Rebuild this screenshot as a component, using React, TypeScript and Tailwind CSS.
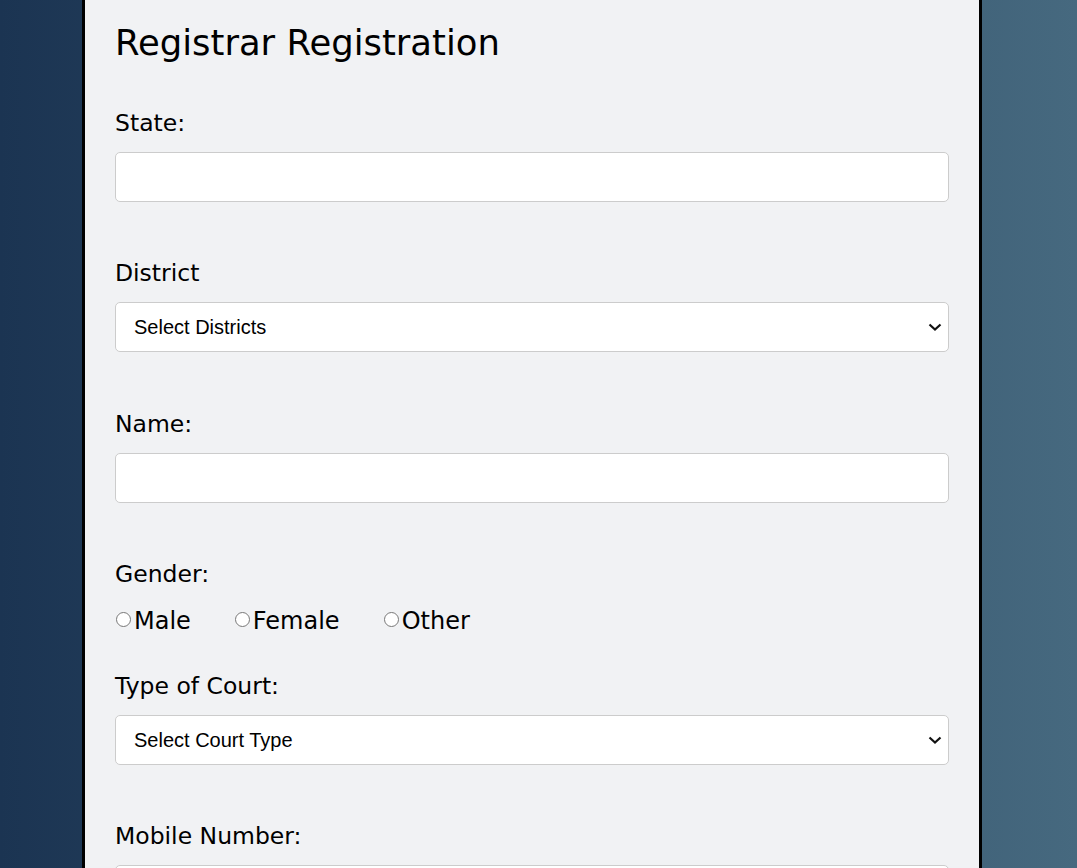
import React, { useState } from 'react';

const labelCls = "block h-[30px] leading-[30px] text-[23.5px] text-black mb-[14px]";
const fieldCls = "block w-full h-[50px] bg-white border border-[#cccccc] rounded-[5px] px-[15px] text-[20px] text-black outline-none";

const Field = ({ label, gap = 'mb-[56px]', children }: { label: string; gap?: string; children: React.ReactNode }) => (
  <div className={gap}>
    <label className={labelCls}>{label}</label>
    {children}
  </div>
);

const Select = ({ placeholder }: { placeholder: string }) => (
  <div className="relative">
    <select
      className={fieldCls + " appearance-none pl-[18px]"}
      style={{ fontFamily: '"Liberation Sans", Arial, sans-serif' }}
      defaultValue=""
    >
      <option value="">{placeholder}</option>
    </select>
    <svg
      className="absolute right-[7px] top-1/2 -translate-y-1/2 pointer-events-none"
      width="14"
      height="10"
      viewBox="0 0 14 10"
      fill="none"
    >
      <path d="M1.5 2.5 L7 7.5 L12.5 2.5" stroke="#111" strokeWidth="2.2" />
    </svg>
  </div>
);

export default function App() {
  const [gender, setGender] = useState('');

  return (
    <div className="min-h-screen w-full bg-gradient-to-r from-[#1b3452] to-[#46697f] overflow-hidden">
      <div
        className="w-[900px] ml-[82px] min-h-[868px] bg-[#f1f2f4] border-x-[3px] border-black px-[30px] pt-[21px]"
        style={{ fontFamily: '"DejaVu Sans", sans-serif' }}
      >
        <h2 className="h-[44px] leading-[44px] text-[35.4px] text-black mb-[43px]">Registrar Registration</h2>

        <Field label="State:">
          <input type="text" className={fieldCls} />
        </Field>

        <Field label="District" gap="mb-[57px]">
          <Select placeholder="Select Districts" />
        </Field>

        <Field label="Name:">
          <input type="text" className={fieldCls} />
        </Field>

        <div className="mb-[35px]">
          <label className="block h-[30px] leading-[30px] text-[23.5px] text-black mb-[17px]">Gender:</label>
          <div className="flex items-center h-[30px] text-[24px] text-black">
            {['Male', 'Female', 'Other'].map((g) => (
              <label key={g} className="inline-flex items-center mr-[43px]">
                <input
                  type="radio"
                  name="gender"
                  checked={gender === g}
                  onChange={() => setGender(g)}
                  className="w-[15px] h-[15px] m-0 ml-px mb-[4px]"
                />
                <span className="ml-[3px]">{g}</span>
              </label>
            ))}
          </div>
        </div>

        <Field label="Type of Court:">
          <Select placeholder="Select Court Type" />
        </Field>

        <Field label="Mobile Number:">
          <input type="text" className={fieldCls} />
        </Field>
      </div>
    </div>
  );
}
